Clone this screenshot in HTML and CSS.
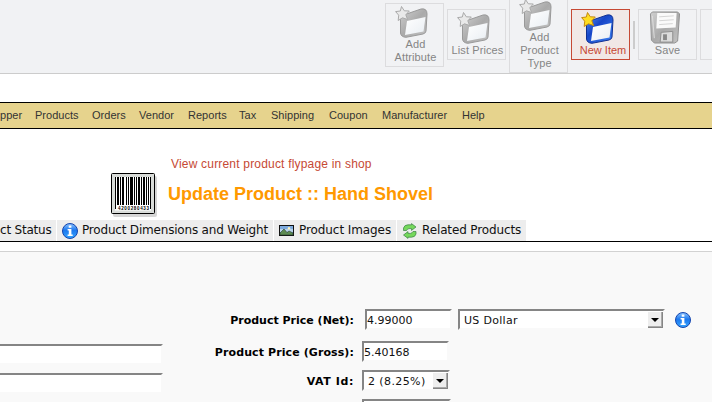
FILE: index.html
```html
<!DOCTYPE html>
<html lang="en">
<head>
<meta charset="utf-8">
<title>Update Product</title>
<link rel="stylesheet" href="styles.css">
</head>
<body>
<svg class="defs" aria-hidden="true">
  <defs>
    <linearGradient id="grayBox" x2="1" y2="1"><stop stop-color="#d0d0d0"/><stop offset=".5" stop-color="#aaa"/><stop offset="1" stop-color="#c2c2c2"/></linearGradient>
    <linearGradient id="blueBox" x2="1" y2="1"><stop stop-color="#5b94f4"/><stop offset=".4" stop-color="#1746c8"/><stop offset="1" stop-color="#3f86f4"/></linearGradient>
    <linearGradient id="pane" x2="1" y2="1"><stop stop-color="#fff"/><stop offset="1" stop-color="#e9eef3"/></linearGradient>
    <linearGradient id="infoFill" x2="0" y2="1"><stop stop-color="#8cc4ff"/><stop offset=".45" stop-color="#1c78ee"/><stop offset="1" stop-color="#35a5ff"/></linearGradient>
    <symbol id="info" viewBox="0 0 16 16">
      <circle cx="8" cy="8" r="7.5" fill="url(#infoFill)" stroke="#1545ae"/>
      <path d="M6.7 2.5h2.7v2.3H6.7zM5.6 6h3.8v5.6h1.3V13H5.6v-1.4h1.2V7.4H5.6z" fill="#fff" stroke="none"/>
    </symbol>
    <symbol id="folder" viewBox="0 0 34 33">
      <path d="M5.5 14Q8 9 13 8.5L26 4Q32 3 32 9L31 26Q31 28 28 29L11 32.3Q6 32 5.5 28Z"/>
      <path d="M12 16 30.5 12 28.5 26.5 10 30Z" fill="url(#pane)" stroke="none"/>
      <path class="star" d="M6.5 1.5 9.3 5.8 14.3 6 10.8 9.8 12.6 14.5 7.5 12.8 3.2 15.5 3.7 10.2.6 6.6 5.3 6Z"/>
    </symbol>
  </defs>
</svg>
<header class="toolbar">
  <a class="tool"><svg class="icon gray"><use href="#folder"/></svg><span>Add<br>Attribute</span></a>
  <a class="tool"><svg class="icon gray"><use href="#folder"/></svg><span>List Prices</span></a>
  <a class="tool"><svg class="icon gray"><use href="#folder"/></svg><span>Add<br>Product<br>Type</span></a>
  <a class="tool active"><svg class="icon blue"><use href="#folder"/></svg><span>New Item</span></a>
  <i class="separator"></i>
  <a class="tool"><svg class="icon" viewBox="0 0 34 34"><path d="M2 3 4 1H30L32 3 30 31 27 33H6L3 30Z" fill="url(#grayBox)" stroke="#919191"/><path d="M9 2H29L28 17 8 18Z" fill="#fafafa"/><path d="M11 6 26 5M11 10 26 9M11 14 25 13" stroke="#d4d4d4"/><path d="M13 22 25 21V32H12Z" fill="#dcdcdc" stroke="#8d8d8d"/><path d="M15 24h4v6h-4z" fill="#888"/><path d="M4 5 6 28" stroke="#ddd"/></svg><span class="plain">Save</span></a>
  <a class="tool"></a>
</header>
<nav class="menu"><a class="m1">pper</a><a class="m2">Products</a><a class="m3">Orders</a><a class="m4">Vendor</a><a class="m5">Reports</a><a class="m6">Tax</a><a class="m7">Shipping</a><a class="m8">Coupon</a><a class="m9">Manufacturer</a><a>Help</a></nav>
<section class="heading">
  <svg class="barcode" viewBox="0 0 50 48">
    <rect x="3" y="4" width="44" height="41" rx="2" fill="#999" opacity=".4"/>
    <rect x="1.5" y="1.5" width="43" height="40" rx="1" fill="#d9dcd9" stroke="#000"/>
    <path d="M5 5H41V38.500H5Z" fill="#fff"/>
    <path d="M5 5h1v32H5zM7 5h2v28H7zM10 5h1v28h-1zM12 5h2v28h-2zM16 5h1v28h-1zM18 5h1v28h-1zM20 5h3v28h-3zM24 5h1v28h-1zM26 5h1v28h-1zM28 5h2v28h-2zM31 5h1v28h-1zM33 5h2v28h-2zM36 5h1v28h-1zM38 5h1v28h-1zM40 5h1v32h-1z"/>
    <text x="8" y="38" textLength="31">4200280433</text>
  </svg>
  <div><a class="shop-link">View current product flypage in shop</a><h1>Update Product :: Hand Shovel</h1></div>
</section>
<div class="tabs">
  <a class="t1">ct Status</a>
  <a class="t2"><svg class="info"><use href="#info"/></svg><span>Product Dimensions and Weight</span></a>
  <a class="t3"><svg class="photo" viewBox="0 0 15 11"><path fill="#111" d="M0 0h15v11H0z"/><path fill="#7daade" d="M1 1h13v9H1z"/><path fill="#b9d4ec" d="M1 4h13v3H1z"/><path d="M1 8 5 4 8 7.500 10 6 14 8V10H1Z" fill="#5c8a50" stroke="#26392d" stroke-width=".6"/><circle cx="10" cy="3.300" r="1.200" fill="#fff4bc"/></svg><span>Product Images</span></a>
  <a class="t4"><svg class="refresh" viewBox="0 0 16 16"><g id="arrow"><path d="M1.500 7.500V5Q2.500 1.800 6 1.800H9.500V.6L14 4 9.500 7.400V5.600H7Q5.500 5.800 4.500 7.500Z"/></g><use href="#arrow" transform="rotate(180 7.750 8)"/></svg><span>Related Products</span></a>
</div>
<main class="panel">
  <div class="left"><i class="field"></i><i class="field"></i></div>
  <div class="form">
    <div class="row net"><label>Product Price (Net):</label><i class="field">4.99000</i><i class="field select currency">US Dollar<b class="drop"></b></i><svg class="info"><use href="#info"/></svg></div>
    <div class="row gross"><label>Product Price (Gross):</label><i class="field">5.40168</i></div>
    <div class="row vat"><label>VAT Id:</label><i class="field select">2 (8.25%)<b class="drop"></b></i></div>
    <div class="row last"><label></label><i class="field"></i></div>
  </div>
</main>
</body>
</html>
```
FILE: styles.css
```css
* { box-sizing: border-box; }
body { margin: 0; width: 712px; height: 402px; overflow: hidden; background: #fff; font-family: "Liberation Sans", Arial, sans-serif; }
.defs { position: absolute; width: 0; height: 0; }
a, i { font-style: normal; flex: none; }

.toolbar { display: flex; align-items: center; gap: 3px; height: 74px; padding-left: 385px; overflow: hidden; background: #f1f2f4; border-bottom: 1px solid #ccc; }
.tool { width: 59px; min-height: 51px; margin-top: -4px; padding: 1px 0 2px; border: 1px solid #dcdcde; text-align: center; font-size: 11px; line-height: 13px; color: #858585; }
.tool .icon { display: block; width: 34px; height: 33px; margin: 0 0 0 9px; }
.tool span { display: block; padding-left: 2px; letter-spacing: .1px; white-space: nowrap; }
.tool.active span { padding-left: 5px; letter-spacing: 0; }
.tool .plain { padding-left: 0; }
.gray { fill: url(#grayBox); stroke: #999; --star: #e9e9e9; --starline: #aaa; }
.blue { fill: url(#blueBox); stroke: #102f91; --star: #ffdd22; --starline: #c58a10; }
.star { fill: var(--star); stroke: var(--starline); }
.tool.active { background: #f1e8e6; border-color: #c64934; color: #c64934; }
.separator { width: 2px; height: 28px; margin: -4px 0 0 0; background: #ccc; }

.menu { display: flex; height: 27px; margin-top: 28px; border: solid #000; border-width: 1px 0; background: #e6d38d; color: #333; font-size: 11px; line-height: 25px; letter-spacing: .03px; white-space: nowrap; }
.m1 { width: 35px; } .m2 { width: 57px; } .m3 { width: 47px; } .m4 { width: 49px; } .m5 { width: 51px; }
.m6 { width: 32px; } .m7 { width: 58px; } .m8 { width: 53px; } .m9 { width: 80px; }

.heading { display: flex; height: 91px; padding: 28px 0 0 110px; }
.barcode { width: 50px; height: 48px; margin: 15px 8px 0 0; flex: none; }
.barcode text { font: bold 4.5px "Liberation Sans", sans-serif; }
.shop-link { display: block; margin-left: 3px; font-size: 12px; line-height: 14px; letter-spacing: .19px; color: #c64934; }
h1 { margin: 12px 0 0; font-size: 18px; line-height: 22px; color: #ff9900; white-space: nowrap; }

.tabs { display: flex; gap: 1px; height: 22px; border-bottom: 1px solid #000; font: 12px/20px "DejaVu Sans", Verdana, sans-serif; white-space: nowrap; color: #111; }
.tabs a { display: flex; background: #ededed; }
.t1 { width: 56px; letter-spacing: -.2px; }
.t2 { width: 216px; padding-left: 5px; letter-spacing: -.19px; }
.t3 { width: 122px; padding-left: 5px; letter-spacing: -.08px; }
.t4 { width: 129px; padding-left: 5px; letter-spacing: -.13px; }
.info { width: 16px; height: 16px; flex: none; }
.tabs .info { margin: 3px 4px 0 0; }
.photo { width: 15px; height: 11px; margin: 5px 5px 0 0; flex: none; }
.refresh { width: 16px; height: 16px; margin: 3px 4px 0 0; flex: none; fill: #75d85b; stroke: #397f45; stroke-width: .7; }

.panel { display: flex; height: 151px; margin-top: 9px; border-top: 1px solid #d2d2d2; background: #f9f9f9; font: 11px/17px "DejaVu Sans", Verdana, sans-serif; }
.left { width: 163px; padding-top: 92px; flex: none; }
.left .field { width: 167px; margin: 0 0 8px -4px; }
.field { display: block; width: 87px; height: 21px; border: 2px solid; border-color: #858585 #f9f9f9 #f9f9f9 #858585; background: #fff; line-height: 20px; color: #111; white-space: nowrap; }
.form { padding-top: 57px; }
.row { display: flex; height: 21px; }
.row label { width: 191px; margin-right: 8px; text-align: right; font-weight: bold; line-height: 23px; color: #000; white-space: nowrap; flex: none; }
.net { margin-bottom: 11px; }
.net label { margin-right: 11px; }
.net .info { margin: 3px 0 0 10px; }
.gross { margin-bottom: 8px; }
.gross label { letter-spacing: .1px; }
.vat { margin-bottom: 8px; }
.vat label { letter-spacing: .6px; }
.vat .field { width: 88px; letter-spacing: .4px; }
.last .field { width: 89px; }
.select { display: flex; justify-content: space-between; padding-left: 4px; }
.currency { width: 207px; margin-left: 6px; letter-spacing: .3px; }
.drop { display: flex; align-items: center; justify-content: center; width: 15px; height: 16px; margin-top: 1px; background: #eee; border: solid #858585; border-width: 0 1px 1px 0; box-shadow: inset -1px -1px #aaa; }
.drop::before { content: ""; border: 4px solid transparent; border-top-color: #000; border-bottom: 0; }
```
